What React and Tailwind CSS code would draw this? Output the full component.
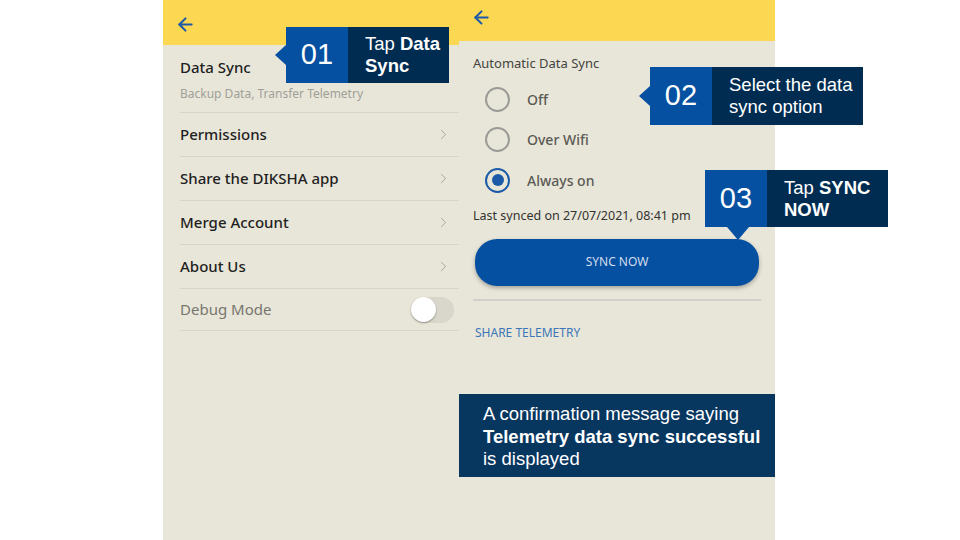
import { ArrowLeft, ChevronRight } from "lucide-react";

/* Tutorial slide: two DIKSHA settings screens with numbered callouts */

const menu = ["Permissions", "Share the DIKSHA app", "Merge Account", "About Us"];
const options = [
  { label: "Off", on: false },
  { label: "Over Wifi", on: false },
  { label: "Always on", on: true },
];

function Radio({ on }) {
  return on ? (
    <span className="w-[25px] h-[25px] rounded-full border-2 border-[#1a5aa6] flex items-center justify-center">
      <span className="w-[12px] h-[12px] rounded-full bg-[#1a5aa6]" />
    </span>
  ) : (
    <span className="w-[25px] h-[25px] rounded-full border-2 border-[#9a9a96]" />
  );
}

function Callout({ num, className, children, pointer }) {
  return (
    <div className={`absolute flex ${className}`} style={{ fontFamily: "'Liberation Sans', Arial, sans-serif" }}>
      {pointer === "left" && (
        <span className="absolute left-[-11px] top-1/2 -translate-y-1/2 w-0 h-0 border-y-[10px] border-y-transparent border-r-[11px] border-r-[#0550a0]" />
      )}
      {pointer === "down" && (
        <span className="absolute left-[22px] bottom-[-13px] w-0 h-0 border-x-[11px] border-x-transparent border-t-[13px] border-t-[#0550a0]" />
      )}
      <div className="w-[62px] bg-[#0550a0] text-white text-[29px] flex items-center justify-center">{num}</div>
      <div className="flex-1 bg-[#002c52] text-white text-[18.5px] leading-[22px] pl-[17px] pr-[2px] flex flex-col justify-center">
        {children}
      </div>
    </div>
  );
}

export default function App() {
  return (
    <div
      className="relative w-[960px] h-[540px] bg-white flex overflow-hidden"
      style={{ fontFamily: "'Noto Sans', 'Open Sans', sans-serif" }}
    >
      <div className="w-[163px]" />

      {/* Left screen: settings menu */}
      <div className="w-[296px] h-full bg-[#e8e6d9] flex flex-col">
        <div className="h-[45px] bg-[#fcd752] flex items-center pl-[12px]">
          <ArrowLeft size={21} strokeWidth={2.4} className="text-[#1d5ba8] mt-[4px]" />
        </div>
        <div className="ml-[17px]">
          <div className="h-[68px] border-b border-[#d8d6ca] pt-[12px]">
            <p className="text-[15px] leading-[20px] font-medium text-[#1f1f1f]">Data Sync</p>
            <p className="text-[12px] leading-[16px] mt-[9px] text-[#a09f98]">Backup Data, Transfer Telemetry</p>
          </div>
          {menu.map((m) => (
            <div key={m} className="h-[44px] border-b border-[#d8d6ca] flex items-center justify-between pr-[7px]">
              <span className="text-[15px] font-medium text-[#1f1f1f]">{m}</span>
              <ChevronRight size={17} strokeWidth={1.4} className="text-[#a8a7a0]" />
            </div>
          ))}
          <div className="h-[42px] border-b border-[#d8d6ca] flex items-center justify-between pr-[5px]">
            <span className="text-[15px] text-[#77766f]">Debug Mode</span>
            <div className="w-[43px] h-[26px] rounded-full bg-[#d9d7cb] flex items-center">
              <span className="w-[25px] h-[25px] rounded-full bg-white shadow-[0_1px_2px_rgba(0,0,0,0.35)]" />
            </div>
          </div>
        </div>
      </div>

      {/* Right screen: data sync settings */}
      <div className="w-[316px] h-full bg-[#e8e6d9] flex flex-col">
        <div className="h-[41px] bg-[#fcd752] flex items-center pl-[12px]">
          <ArrowLeft size={21} strokeWidth={2.4} className="text-[#1d5ba8] -mt-[6px]" />
        </div>
        <div className="pl-[14px]">
          <p className="mt-[13px] text-[13px] leading-[18px] text-[#444440]">Automatic Data Sync</p>
          <div className="mt-[7px] flex flex-col">
            {options.map((o) => (
              <div key={o.label} className="h-[40.5px] flex items-center pl-[12px]">
                <Radio on={o.on} />
                <span className="ml-[17px] text-[14px] font-medium text-[#5b5a55]">{o.label}</span>
              </div>
            ))}
          </div>
          <p className="mt-[6px] text-[12.5px] leading-[17px] text-[#333330]">Last synced on 27/07/2021, 08:41 pm</p>
          <button className="mt-[15px] ml-[2px] w-[284px] h-[47px] rounded-[22px] bg-[#0550a0] text-[#d3ddee] text-[12px] shadow-[0_2px_4px_rgba(0,0,0,0.3)]">
            SYNC NOW
          </button>
          <div className="mt-[13px] w-[288px] h-[2px] bg-[#cfd0cc]" />
          <p className="mt-[24px] ml-[2px] text-[12px] leading-[16px] text-[#3d76b8]">SHARE TELEMETRY</p>
        </div>
      </div>

      {/* Callouts */}
      <Callout num="01" pointer="left" className="left-[286px] top-[27px] w-[163px] h-[56px]">
        <p>Tap <b>Data</b></p>
        <p><b>Sync</b></p>
      </Callout>
      <Callout num="02" pointer="left" className="left-[650px] top-[67px] w-[213px] h-[58px]">
        <p>Select the data</p>
        <p>sync option</p>
      </Callout>
      <Callout num="03" pointer="down" className="left-[705px] top-[170px] w-[183px] h-[57px]">
        <p>Tap <b>SYNC</b></p>
        <p><b>NOW</b></p>
      </Callout>

      {/* Confirmation note */}
      <div
        className="absolute left-[459px] top-[394px] w-[316px] h-[83px] bg-[#07365f] text-white text-[18.5px] leading-[22.5px] pl-[24px] pt-[9px]"
        style={{ fontFamily: "'Liberation Sans', Arial, sans-serif" }}
      >
        <p>A confirmation message saying</p>
        <p className="font-bold">Telemetry data sync successful</p>
        <p>is displayed</p>
      </div>
    </div>
  );
}
